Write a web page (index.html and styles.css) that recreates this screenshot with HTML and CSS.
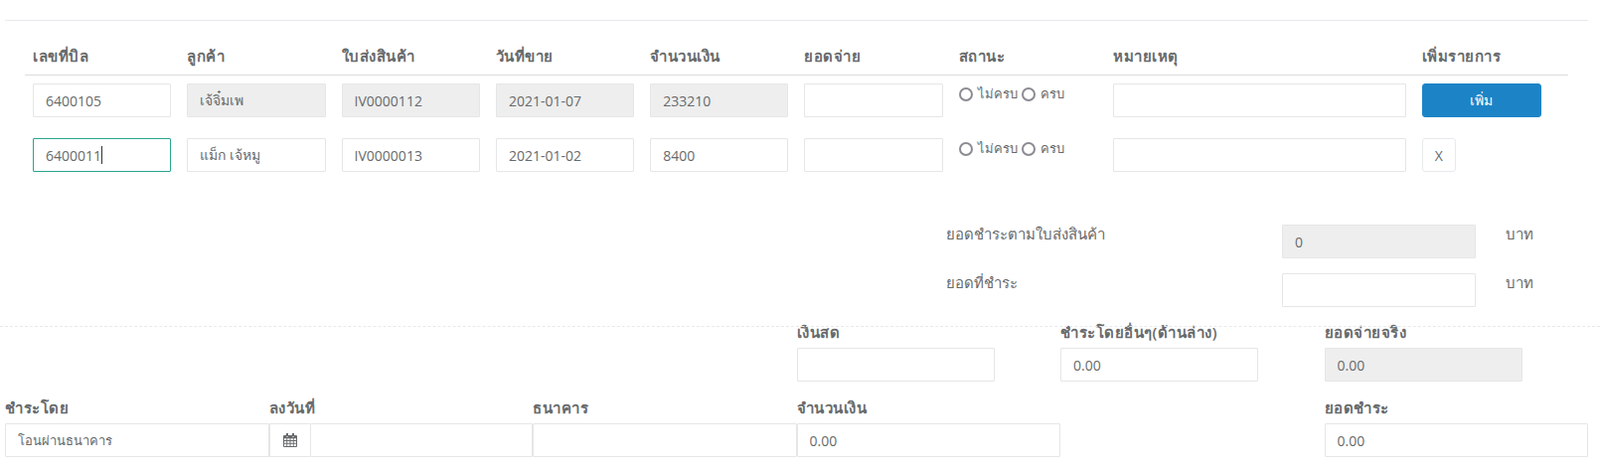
FILE: index.html
```html
<!DOCTYPE html>
<html>
  <head>
    <title>Payment</title>
    <link rel="stylesheet" href="styles.css">
  </head>
  <body>
    <hr class="top-line">

    <table class="bill-table">
      <thead>
        <tr>
          <th>เลขที่บิล</th>
          <th>ลูกค้า</th>
          <th>ใบส่งสินค้า</th>
          <th>วันที่ขาย</th>
          <th>จำนวนเงิน</th>
          <th>ยอดจ่าย</th>
          <th>สถานะ</th>
          <th class="wide">หมายเหตุ</th>
          <th>เพิ่มรายการ</th>
        </tr>
      </thead>
      <tbody>
        <tr>
          <td><input class="field" type="text" value="6400105"></td>
          <td><input class="field" type="text" value="เจ้จิ๋มเพ" disabled></td>
          <td><input class="field" type="text" value="IV0000112" disabled></td>
          <td><input class="field" type="text" value="2021-01-07" disabled></td>
          <td><input class="field" type="text" value="233210" disabled></td>
          <td><input class="field" type="text"></td>
          <td>
            <div class="status">
              <input class="radio" type="radio" name="status1"><span>ไม่ครบ</span>
              <input class="radio" type="radio" name="status1"><span>ครบ</span>
            </div>
          </td>
          <td><input class="field" type="text"></td>
          <td><button class="btn-add">เพิ่ม</button></td>
        </tr>
        <tr>
          <td>
            <div class="caret-wrap">
              <input class="field focused" type="text" value="6400011">
              <span class="caret"></span>
            </div>
          </td>
          <td><input class="field" type="text" value="แม็ก เจ้หมู"></td>
          <td><input class="field" type="text" value="IV0000013"></td>
          <td><input class="field" type="text" value="2021-01-02"></td>
          <td><input class="field" type="text" value="8400"></td>
          <td><input class="field" type="text"></td>
          <td>
            <div class="status">
              <input class="radio" type="radio" name="status2"><span>ไม่ครบ</span>
              <input class="radio" type="radio" name="status2"><span>ครบ</span>
            </div>
          </td>
          <td><input class="field" type="text"></td>
          <td><button class="btn-remove">X</button></td>
        </tr>
      </tbody>
    </table>

    <div class="totals">
      <div class="total-row">
        <label class="total-label">ยอดชำระตามใบส่งสินค้า</label>
        <input class="field total-input" type="text" value="0" disabled>
        <span class="total-unit">บาท</span>
      </div>
      <div class="total-row">
        <label class="total-label">ยอดที่ชำระ</label>
        <input class="field total-input" type="text">
        <span class="total-unit">บาท</span>
      </div>
    </div>

    <div class="pay-grid">
      <div class="pay-cell col-4">
        <label>เงินสด</label>
        <input class="field short" type="text">
      </div>
      <div class="pay-cell">
        <label>ชำระโดยอื่นๆ(ด้านล่าง)</label>
        <input class="field short" type="text" value="0.00">
      </div>
      <div class="pay-cell">
        <label>ยอดจ่ายจริง</label>
        <input class="field short" type="text" value="0.00" disabled>
      </div>

      <div class="pay-cell">
        <label>ชำระโดย</label>
        <select class="field plain-select">
          <option>โอนผ่านธนาคาร</option>
        </select>
      </div>
      <div class="pay-cell">
        <label>ลงวันที่</label>
        <div class="date-group">
          <span class="date-addon">
            <svg class="calendar-icon" viewBox="0 0 14 14" width="14" height="14">
              <path d="M3 0h2v3H3zM9 0h2v3H9z"/>
              <path d="M1 2h2v1.500h2V2h4v1.500h2V2h2a1 1 0 0 1 1 1v10a1 1 0 0 1-1 1H1a1 1 0 0 1-1-1V3a1 1 0 0 1 1-1z"/>
              <path fill="#fff" d="M1 5.200h2.300v1.800H1zM4.200 5.200h2.300v1.800H4.200zM7.500 5.200h2.300v1.800H7.500zM10.700 5.200H13v1.800h-2.300zM1 8h2.300v1.800H1zM4.200 8h2.300v1.800H4.200zM7.500 8h2.300v1.800H7.500zM10.700 8H13v1.800h-2.300zM1 10.800h2.300V13H1zM4.200 10.800h2.300V13H4.200zM7.500 10.800h2.300V13H7.500zM10.700 10.800H13V13h-2.300z"/>
            </svg>
          </span>
          <input class="field date-input" type="text">
        </div>
      </div>
      <div class="pay-cell">
        <label>ธนาคาร</label>
        <input class="field" type="text">
      </div>
      <div class="pay-cell">
        <label>จำนวนเงิน</label>
        <input class="field" type="text" value="0.00">
      </div>
      <div class="pay-cell col-6">
        <label>ยอดชำระ</label>
        <input class="field" type="text" value="0.00">
      </div>
    </div>
  </body>
</html>
```

FILE: styles.css
```css
html, body {
  margin: 0;
  padding: 0;
  background: #fff;
}

body {
  font-family: "Open Sans", "Noto Sans", sans-serif;
  font-size: 13px;
  color: #676a6c;
  overflow: hidden;
}

.top-line {
  height: 1px;
  margin: 20px 12px 0 5px;
  border: 0;
  background: #e7eaec;
}

/* bill rows */
.bill-table {
  width: 1553px;
  margin: 24px 0 0 25px;
  table-layout: fixed;
  border-spacing: 0;
}

.bill-table th {
  width: 10%;
  height: 31px;
  padding: 0 8px 6px;
  box-sizing: border-box;
  border-bottom: 1px solid #ddd;
  font-size: 15px;
  font-weight: 600;
  letter-spacing: 0.5px;
  text-align: left;
  vertical-align: bottom;
}

.bill-table th.wide {
  width: 20%;
}

.bill-table td {
  padding: 8px 8px 13px;
  vertical-align: top;
}

.field {
  display: block;
  width: 100%;
  height: 34px;
  padding: 6px 12px;
  box-sizing: border-box;
  border: 1px solid #e5e6e7;
  border-radius: 1px;
  background: #fff;
  color: #676a6c;
  font-family: inherit;
  font-size: 14px;
  outline: none;
}

.field:disabled {
  background: #eee;
  opacity: 1;
}

.field.focused {
  border-color: #2aa58f;
}

.caret-wrap {
  position: relative;
}

.caret {
  position: absolute;
  left: 69px;
  top: 8px;
  width: 1px;
  height: 18px;
  background: #333;
}

.status {
  display: flex;
  align-items: center;
  height: 21px;
}

.radio {
  appearance: none;
  width: 14px;
  height: 14px;
  margin: 0 5px 0 0;
  border: 2px solid #8b8b93;
  border-radius: 50%;
  background: #fff;
}

.status span {
  margin-right: 4px;
}

.btn-add {
  display: block;
  width: 120px;
  height: 34px;
  border: 1px solid #1c84c6;
  border-radius: 3px;
  background: #1c84c6;
  color: #fff;
  font-family: inherit;
  font-size: 14px;
}

.btn-remove {
  display: block;
  width: 34px;
  height: 34px;
  padding: 0;
  border: 1px solid #e7eaec;
  border-radius: 3px;
  background: #fff;
  color: #676a6c;
  font-family: inherit;
  font-size: 14px;
}

/* totals */
.totals {
  margin-top: 40px;
  padding-left: 952px;
  font-size: 15px;
  line-height: 18px;
}

.total-row {
  display: flex;
  height: 34px;
  margin-bottom: 15px;
}

.total-label {
  width: 338px;
}

.total-input {
  width: 195px;
}

.total-unit {
  margin-left: 30px;
}

/* payment grid */
.pay-grid {
  display: grid;
  grid-template-columns: repeat(6, 1fr);
  row-gap: 20px;
  margin-top: 19px;
  padding: 0 12px 0 5px;
  position: relative;
}

.pay-grid::before {
  content: "";
  position: absolute;
  left: 0;
  right: 0;
  top: 0;
  border-top: 1px dashed #e7eaec;
}

.pay-cell label {
  display: block;
  height: 22px;
  font-size: 15px;
  font-weight: 600;
  letter-spacing: 0.5px;
  line-height: 13px;
}

.col-4 {
  grid-column-start: 4;
}

.col-6 {
  grid-column-start: 6;
}

.short {
  width: 199px;
}

.plain-select {
  appearance: none;
  font-size: 13px;
}

.date-group {
  display: flex;
  height: 34px;
}

.date-addon {
  display: flex;
  flex: none;
  align-items: center;
  justify-content: center;
  width: 41px;
  box-sizing: border-box;
  border: 1px solid #e5e6e7;
  border-right: 0;
}

.calendar-icon {
  fill: #676a6c;
}

.date-input {
  flex: 1;
}
```
